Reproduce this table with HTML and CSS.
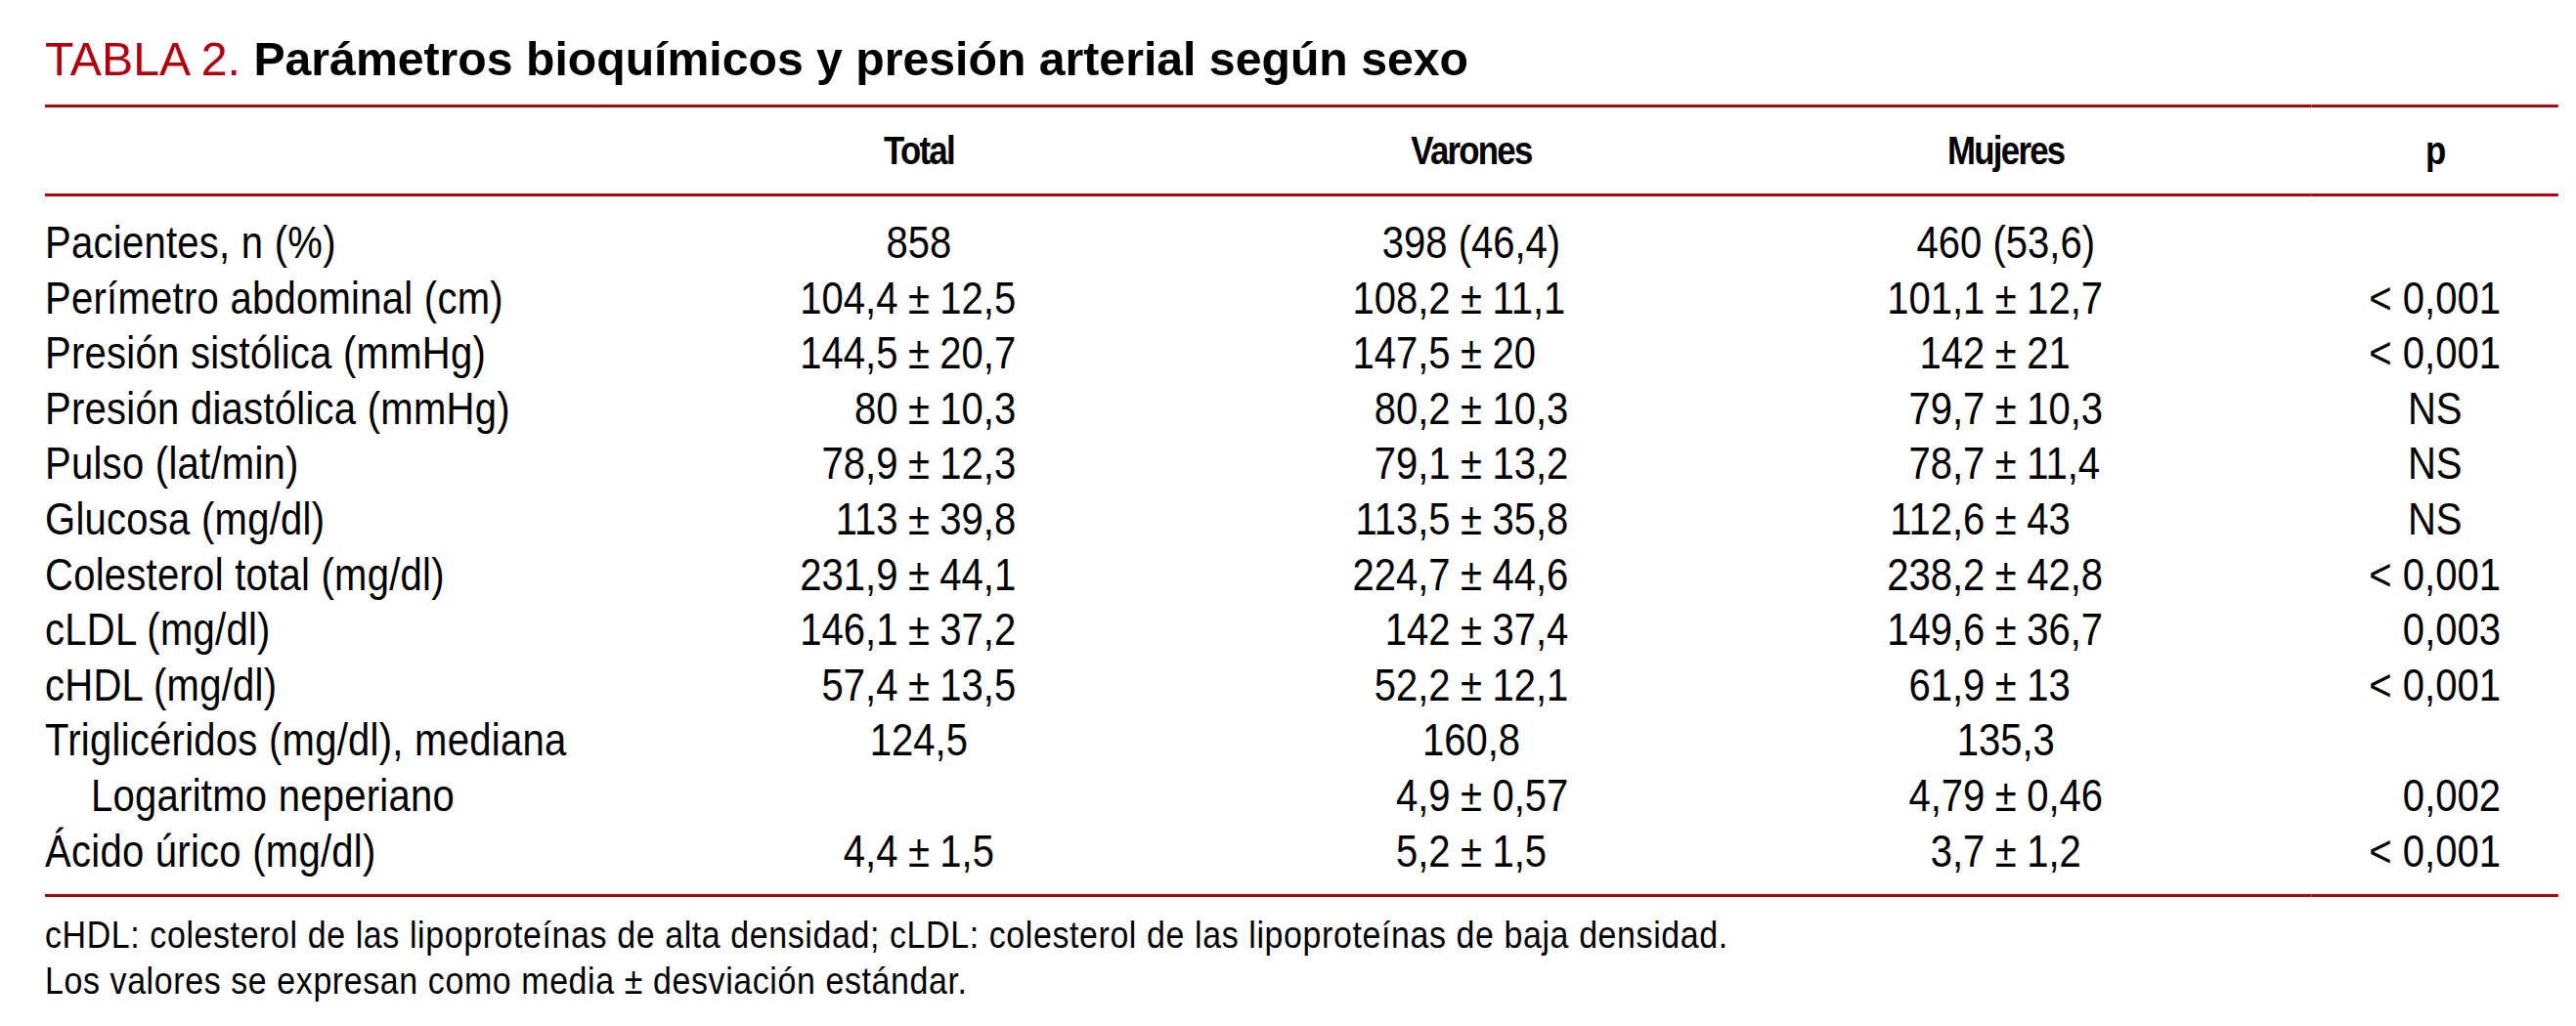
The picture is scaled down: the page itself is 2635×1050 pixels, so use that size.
FILE: index.html
```html
<!DOCTYPE html>
<html lang="es">
<head>
<meta charset="utf-8">
<title>Tabla 2</title>
<link rel="stylesheet" href="styles.css">
</head>
<body>
<div class="page">
  <h1 class="title"><span class="title-num">TABLA 2.</span> <span class="title-text">Parámetros bioquímicos y presión arterial según sexo</span></h1>
  <div class="sheet">
    <table class="data">
      <colgroup>
        <col class="c-label"><col class="c-total"><col class="c-var"><col class="c-muj"><col class="c-p">
      </colgroup>
      <thead>
        <tr><th></th><th>Total</th><th>Varones</th><th>Mujeres</th><th>p</th></tr>
      </thead>
      <tbody>
        <tr><td class="lbl">Pacientes, n (%)</td><td>858</td><td>398 (46,4)</td><td>460 (53,6)</td><td></td></tr>
        <tr><td class="lbl">Perímetro abdominal (cm)</td>
          <td><span class="pm"><span class="l">104,4</span><span class="s">±</span><span class="r">12,5</span></span></td>
          <td><span class="pm"><span class="l">108,2</span><span class="s">±</span><span class="r">11,1</span></span></td>
          <td><span class="pm"><span class="l">101,1</span><span class="s">±</span><span class="r">12,7</span></span></td>
          <td>&lt; 0,001</td></tr>
        <tr><td class="lbl">Presión sistólica (mmHg)</td>
          <td><span class="pm"><span class="l">144,5</span><span class="s">±</span><span class="r">20,7</span></span></td>
          <td><span class="pm"><span class="l">147,5</span><span class="s">±</span><span class="r">20</span></span></td>
          <td><span class="pm"><span class="l">142</span><span class="s">±</span><span class="r">21</span></span></td>
          <td>&lt; 0,001</td></tr>
        <tr><td class="lbl">Presión diastólica (mmHg)</td>
          <td><span class="pm"><span class="l">80</span><span class="s">±</span><span class="r">10,3</span></span></td>
          <td><span class="pm"><span class="l">80,2</span><span class="s">±</span><span class="r">10,3</span></span></td>
          <td><span class="pm"><span class="l">79,7</span><span class="s">±</span><span class="r">10,3</span></span></td>
          <td>NS</td></tr>
        <tr><td class="lbl">Pulso (lat/min)</td>
          <td><span class="pm"><span class="l">78,9</span><span class="s">±</span><span class="r">12,3</span></span></td>
          <td><span class="pm"><span class="l">79,1</span><span class="s">±</span><span class="r">13,2</span></span></td>
          <td><span class="pm"><span class="l">78,7</span><span class="s">±</span><span class="r">11,4</span></span></td>
          <td>NS</td></tr>
        <tr><td class="lbl">Glucosa (mg/dl)</td>
          <td><span class="pm"><span class="l">113</span><span class="s">±</span><span class="r">39,8</span></span></td>
          <td><span class="pm"><span class="l">113,5</span><span class="s">±</span><span class="r">35,8</span></span></td>
          <td><span class="pm"><span class="l">112,6</span><span class="s">±</span><span class="r">43</span></span></td>
          <td>NS</td></tr>
        <tr><td class="lbl">Colesterol total (mg/dl)</td>
          <td><span class="pm"><span class="l">231,9</span><span class="s">±</span><span class="r">44,1</span></span></td>
          <td><span class="pm"><span class="l">224,7</span><span class="s">±</span><span class="r">44,6</span></span></td>
          <td><span class="pm"><span class="l">238,2</span><span class="s">±</span><span class="r">42,8</span></span></td>
          <td>&lt; 0,001</td></tr>
        <tr><td class="lbl">cLDL (mg/dl)</td>
          <td><span class="pm"><span class="l">146,1</span><span class="s">±</span><span class="r">37,2</span></span></td>
          <td><span class="pm"><span class="l">142</span><span class="s">±</span><span class="r">37,4</span></span></td>
          <td><span class="pm"><span class="l">149,6</span><span class="s">±</span><span class="r">36,7</span></span></td>
          <td><span class="ghost">&lt; </span>0,003</td></tr>
        <tr><td class="lbl">cHDL (mg/dl)</td>
          <td><span class="pm"><span class="l">57,4</span><span class="s">±</span><span class="r">13,5</span></span></td>
          <td><span class="pm"><span class="l">52,2</span><span class="s">±</span><span class="r">12,1</span></span></td>
          <td><span class="pm"><span class="l">61,9</span><span class="s">±</span><span class="r">13</span></span></td>
          <td>&lt; 0,001</td></tr>
        <tr><td class="lbl">Triglicéridos (mg/dl), mediana</td><td>124,5</td><td>160,8</td><td>135,3</td><td></td></tr>
        <tr><td class="lbl sub">Logaritmo neperiano</td>
          <td></td>
          <td><span class="pm"><span class="l">4,9</span><span class="s">±</span><span class="r">0,57</span></span></td>
          <td><span class="pm"><span class="l">4,79</span><span class="s">±</span><span class="r">0,46</span></span></td>
          <td><span class="ghost">&lt; </span>0,002</td></tr>
        <tr><td class="lbl">Ácido úrico (mg/dl)</td>
          <td><span class="pm"><span class="l">4,4</span><span class="s">±</span><span class="r">1,5</span></span></td>
          <td><span class="pm"><span class="l">5,2</span><span class="s">±</span><span class="r">1,5</span></span></td>
          <td><span class="pm"><span class="l">3,7</span><span class="s">±</span><span class="r">1,2</span></span></td>
          <td>&lt; 0,001</td></tr>
      </tbody>
    </table>
    <div class="notes">
      <p>cHDL: colesterol de las lipoproteínas de alta densidad; cLDL: colesterol de las lipoproteínas de baja densidad.</p>
      <p>Los valores se expresan como media ± desviación estándar.</p>
    </div>
  </div>
</div>
</body>
</html>
```

FILE: styles.css
```css
html, body {
  margin: 0;
  padding: 0;
  background: #ffffff;
}

body {
  color: #000000;
  font-family: "Liberation Sans", Arial, sans-serif;
}

.page {
  width: 2589px;
  padding: 32px 0 0 46px;
  overflow: hidden;
}

.title {
  margin: 0 0 19px 0;
  font-family: "Liberation Sans", Arial, sans-serif;
  font-size: 48.2px;
  line-height: 56px;
  font-weight: normal;
  white-space: nowrap;
}

.title-num {
  color: #b3000f;
  font-weight: normal;
}

.title-text {
  font-weight: bold;
}

/* the table uses a condensed face: Liberation Sans compressed to 87% width */
.sheet {
  width: 2955px;
  transform: scaleX(0.87);
  transform-origin: 0 0;
}

.data {
  width: 2955px;
  table-layout: fixed;
  border-collapse: separate;
  border-spacing: 0;
}

.c-label { width: 647px; }
.c-total { width: 761px; }
.c-var { width: 538px; }
.c-muj { width: 719px; }
.c-p { width: 290px; }

.data th {
  font-weight: bold;
  font-size: 40px;
  line-height: 46px;
  text-align: center;
  padding: 21px 0 21px 0;
  border-top: 3px solid #b3000f;
  border-bottom: 3px solid #b3000f;
  letter-spacing: -2px;
}

.data td {
  font-size: 46px;
  line-height: 56.6px;
  height: 56.6px;
  padding: 0;
  text-align: center;
  white-space: nowrap;
  vertical-align: top;
}

.data td.lbl {
  text-align: left;
  letter-spacing: 0.3px;
}

.data td.sub {
  padding-left: 54px;
}

.data tbody tr:first-child td {
  padding-top: 19px;
}

.data tbody tr:last-child td {
  padding-bottom: 16px;
  border-bottom: 3px solid #b3000f;
}

.pm {
  display: grid;
  grid-template-columns: 1fr auto 1fr;
  width: 100%;
}

.pm .l {
  text-align: right;
}

.pm .s {
  padding: 0 12px;
}

.pm .r {
  text-align: left;
}

.ghost {
  visibility: hidden;
}

.notes {
  margin-top: 15px;
  font-size: 39px;
  line-height: 47px;
  letter-spacing: 0.7px;
}

.notes p {
  margin: 0;
}
```
